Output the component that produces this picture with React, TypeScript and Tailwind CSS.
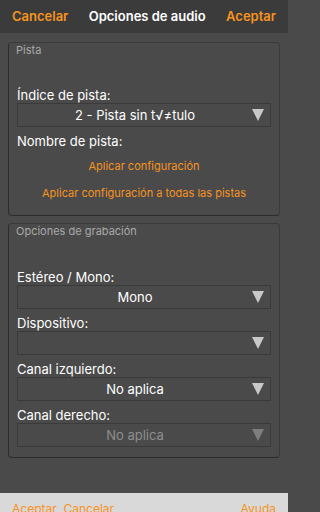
const orange = "text-[#f7931e]";

function Arrow({ disabled }: { disabled?: boolean }) {
  return (
    <svg width="12" height="12" viewBox="0 0 12 12" className="shrink-0">
      <polygon points="0,0 12,0 6,12" fill={disabled ? "#7e7e7e" : "#c8c8c8"} />
    </svg>
  );
}

function Select({ value, disabled }: { value?: string; disabled?: boolean }) {
  return (
    <div className="flex h-[24px] items-center border border-[#3a3a3a] pr-[6px]">
      <span
        className={
          "flex-1 text-center text-[13px] leading-[22px] " +
          (disabled ? "text-[#8e8e8e]" : "text-white")
        }
      >
        {value}
      </span>
      <Arrow disabled={disabled} />
    </div>
  );
}

function Label({ children, className = "" }: { children: string; className?: string }) {
  return <p className={"h-[16px] text-[13px] leading-[16px] text-white " + className}>{children}</p>;
}

function Group({ title, children, className = "" }: { title: string; children: React.ReactNode; className?: string }) {
  return (
    <section
      className={
        "rounded-[4px] border border-[#2c2c2c] border-t-[#3a3a3a] border-r-[#3a3a3a] px-[8px] " + className
      }
    >
      <p className="-ml-px h-[14px] text-[11px] leading-[14px] text-[#a9a9a9]">{title}</p>
      {children}
    </section>
  );
}

export default function App() {
  return (
    <div className="h-[512px] w-full bg-[#4a4a4a]">
      <main
        className="flex h-[512px] w-[288px] flex-col overflow-hidden bg-[#4a4a4a]"
        style={{ fontFamily: "Inter, 'Liberation Sans', sans-serif" }}
      >
        <header className="flex h-[33px] shrink-0 items-center justify-between bg-[#3b3b3b] px-[12px] text-[13px] font-semibold">
          <span className={orange}>Cancelar</span>
          <span className="text-white">Opciones de audio</span>
          <span className={orange}>Aceptar</span>
        </header>

        <div className="flex flex-col gap-[7px] px-[8px] pt-[9px]">
          <Group title="Pista" className="pb-[14px]">
            <Label className="mt-[30px]">Índice de pista:</Label>
            <Select value={"2 - Pista sin t\u221A\u2260tulo"} />
            <Label className="mt-[6px]">Nombre de pista:</Label>
            <button className={"mt-[9px] block h-[16px] w-full text-center text-[11px] leading-[16px] " + orange}>
              Aplicar configuración
            </button>
            <button className={"mt-[11px] block h-[16px] w-full text-center text-[11px] leading-[16px] " + orange}>
              Aplicar configuración a todas las pistas
            </button>
          </Group>

          <Group title="Opciones de grabación" className="pb-[10px]">
            <Label className="mt-[31px]">Estéreo / Mono:</Label>
            <Select value="Mono" />
            <Label className="mt-[6px]">Dispositivo:</Label>
            <Select />
            <Label className="mt-[6px]">Canal izquierdo:</Label>
            <Select value="No aplica" />
            <Label className="mt-[6px]">Canal derecho:</Label>
            <Select value="No aplica" disabled />
          </Group>
        </div>

        <div className="flex-1" />

        <footer className="flex h-[19px] shrink-0 items-start justify-between bg-[#d9d9d9] px-[12px] pt-[8px] text-[12px] leading-[16px]">
          <span className={orange}>Aceptar&nbsp; Cancelar</span>
          <span className={orange}>Ayuda</span>
        </footer>
      </main>
    </div>
  );
}
